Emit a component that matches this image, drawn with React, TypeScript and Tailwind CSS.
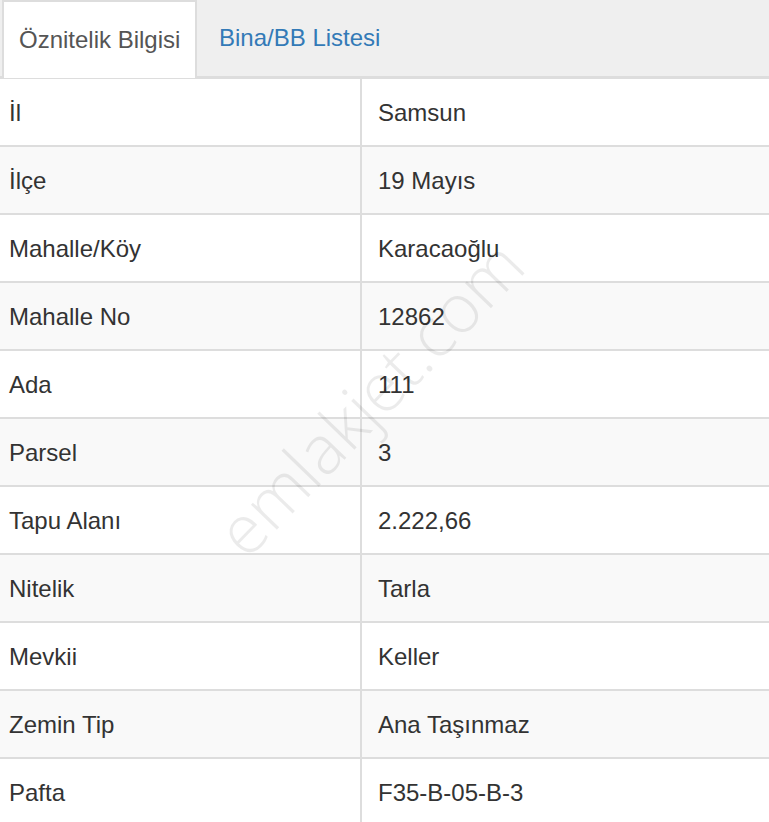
const rows: [string, string][] = [
  ["İl", "Samsun"],
  ["İlçe", "19 Mayıs"],
  ["Mahalle/Köy", "Karacaoğlu"],
  ["Mahalle No", "12862"],
  ["Ada", "111"],
  ["Parsel", "3"],
  ["Tapu Alanı", "2.222,66"],
  ["Nitelik", "Tarla"],
  ["Mevkii", "Keller"],
  ["Zemin Tip", "Ana Taşınmaz"],
  ["Pafta", "F35-B-05-B-3"],
];

export default function App() {
  return (
    <div
      className="relative w-[769px] h-[822px] overflow-hidden bg-white text-[24px] text-[#333]"
      style={{ fontFamily: '"Liberation Sans", Arial, sans-serif' }}
    >
      {/* Tabs */}
      <div className="flex h-[79px] bg-[#efefef] border-b-[3px] border-[#dddddd]">
        <div className="ml-[2px] w-[195px] h-[78px] -mb-[2px] bg-white border-x-2 border-t-2 border-[#dddddd] flex items-center pl-[15px] text-[#555]">
          Öznitelik Bilgisi
        </div>
        <div className="flex items-center pl-[22px] text-[#337ab7]">Bina/BB Listesi</div>
      </div>

      {/* Table */}
      <div className="grid grid-cols-[362px_1fr]">
        {rows.map(([label, value], i) => (
          <div key={label} className={`contents ${i % 2 === 1 ? "[&>div]:bg-[#f9f9f9]" : ""}`}>
            <div className="h-[68px] flex items-center pt-[2px] pl-[9px] border-b-2 border-r-2 border-[#dddddd]">
              {label}
            </div>
            <div className="h-[68px] flex items-center pt-[2px] pl-[16px] border-b-2 border-[#dddddd]">
              {value}
            </div>
          </div>
        ))}
      </div>

      {/* Watermark */}
      <div
        aria-hidden="true"
        className="pointer-events-none absolute left-[369px] top-[397px] -translate-x-1/2 -translate-y-1/2 -rotate-[46deg] text-[68px] font-light text-black/[0.08] whitespace-nowrap"
        style={{ fontFamily: '"Open Sans", "Liberation Sans", sans-serif' }}
      >
        emlakjet.com
      </div>
    </div>
  );
}
